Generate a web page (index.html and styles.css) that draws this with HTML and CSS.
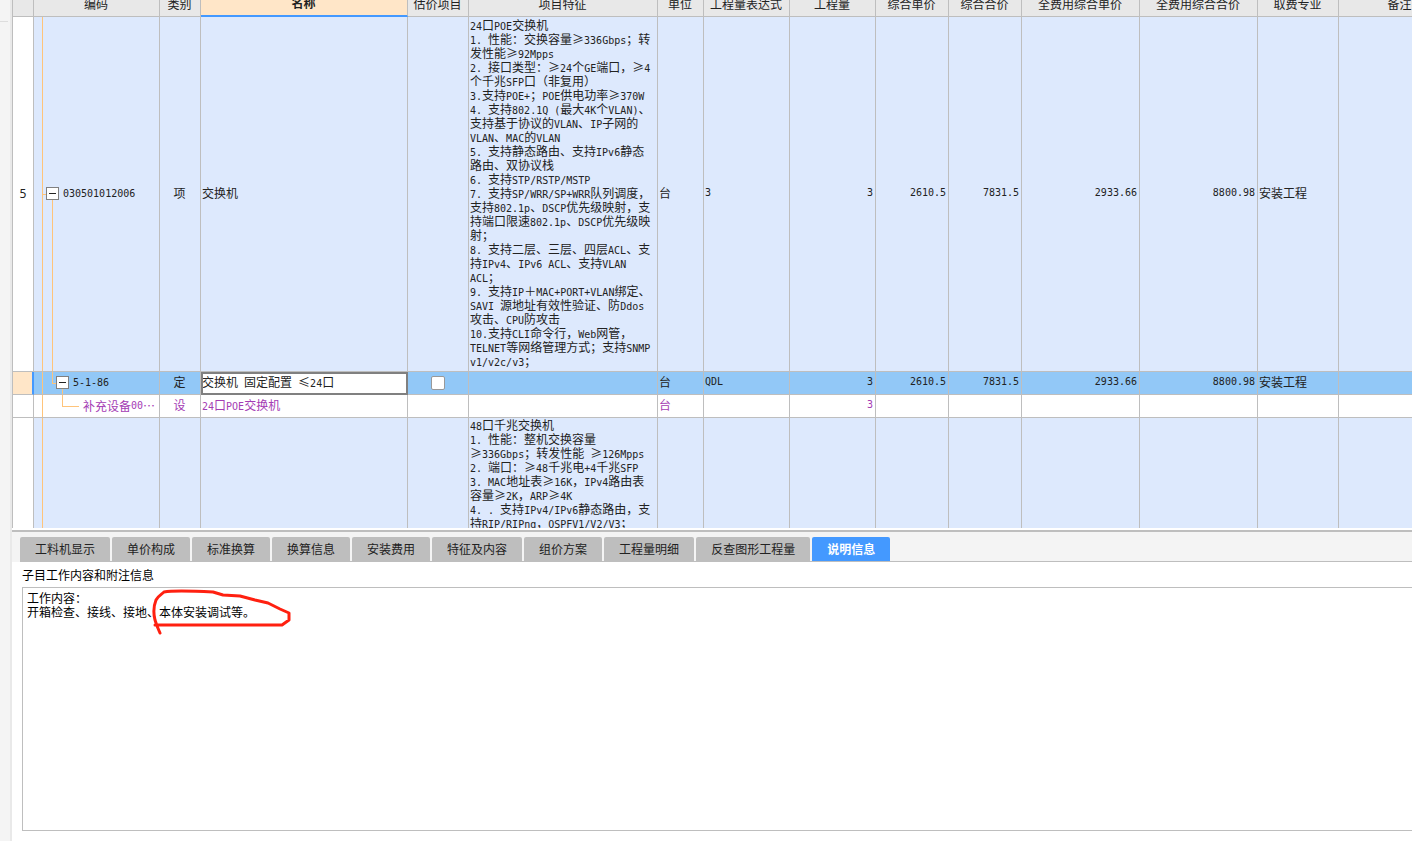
FILE: index.html
```html
<!DOCTYPE html>
<html lang="zh-CN">
<head>
<meta charset="utf-8">
<title>工程量清单</title>
<link rel="stylesheet" href="styles.css">
</head>
<body>
<div class="app">
  <aside class="gutter"><div class="gutter-line"></div></aside>
  <main class="workspace">
    <section class="grid-pane">
      <table class="grid">
        <colgroup>
          <col class="c-no"><col class="c-code"><col class="c-kind"><col class="c-name"><col class="c-est"><col class="c-feature"><col class="c-unit"><col class="c-qty"><col class="c-qty"><col class="c-price"><col class="c-price"><col class="c-full"><col class="c-full"><col class="c-major"><col class="c-note">
        </colgroup>
        <thead>
          <tr>
            <th></th><th>编码</th><th>类别</th><th class="active">名称</th><th>估价项目</th><th>项目特征</th><th>单位</th><th>工程量表达式</th><th>工程量</th><th>综合单价</th><th>综合合价</th><th>全费用综合单价</th><th>全费用综合合价</th><th>取费专业</th><th>备注</th>
          </tr>
        </thead>
        <tbody>
          <tr class="item">
            <td class="no">5</td>
            <td class="code tree-root"><div class="node"><button class="toggle" type="button" aria-label="折叠"></button><span class="num">030501012006</span></div></td>
            <td class="mid">项</td>
            <td>交换机</td>
            <td></td>
            <td class="feature"><span>24</span>口<span>POE</span>交换机<br>
<span>1. </span>性能：交换容量≥<span>336Gbps</span>；转<br>
发性能≥<span>92Mpps</span><br>
<span>2. </span>接口类型：≥<span>24</span>个<span>GE</span>端口，≥<span>4</span><br>
个千兆<span>SFP</span>口（非复用）<br>
<span>3.</span>支持<span>POE+</span>；<span>POE</span>供电功率≥<span>370W</span><br>
<span>4. </span>支持<span>802.1Q (</span>最大<span>4K</span>个<span>VLAN)</span>、<br>
支持基于协议的<span>VLAN</span>、<span>IP</span>子网的<br>
<span>VLAN</span>、<span>MAC</span>的<span>VLAN</span><br>
<span>5. </span>支持静态路由、支持<span>IPv6</span>静态<br>
路由、双协议栈<br>
<span>6. </span>支持<span>STP/RSTP/MSTP</span><br>
<span>7. </span>支持<span>SP/WRR/SP+WRR</span>队列调度，<br>
支持<span>802.1p</span>、<span>DSCP</span>优先级映射，支<br>
持端口限速<span>802.1p</span>、<span>DSCP</span>优先级映<br>
射；<br>
<span>8. </span>支持二层、三层、四层<span>ACL</span>、支<br>
持<span>IPv4</span>、<span>IPv6 ACL</span>、支持<span>VLAN</span><br>
<span>ACL</span>；<br>
<span>9. </span>支持<span>IP</span>＋<span>MAC+PORT+VLAN</span>绑定、<br>
<span>SAVI </span>源地址有效性验证、防<span>Ddos</span><br>
攻击、<span>CPU</span>防攻击<br>
<span>10.</span>支持<span>CLI</span>命令行，<span>Web</span>网管，<br>
<span>TELNET</span>等网络管理方式；支持<span>SNMP</span><br>
<span>v1/v2c/v3</span>；</td>
            <td>台</td>
            <td class="num">3</td>
            <td class="num right">3</td>
            <td class="num right">2610.5</td>
            <td class="num right">7831.5</td>
            <td class="num right">2933.66</td>
            <td class="num right">8800.98</td>
            <td>安装工程</td>
            <td></td>
          </tr>
          <tr class="short selected">
            <td class="no"></td>
            <td class="code tree-child"><div class="node level-2"><button class="toggle" type="button" aria-label="折叠"></button><span class="num">5-1-86</span></div></td>
            <td class="mid">定</td>
            <td class="editing">交换机<span class="en"> </span>固定配置<span class="en"> </span>≤<span class="en">24</span>口</td>
            <td class="mid"><input class="check" type="checkbox" aria-label="估价项目"></td>
            <td></td>
            <td>台</td>
            <td class="num">QDL</td>
            <td class="num right">3</td>
            <td class="num right">2610.5</td>
            <td class="num right">7831.5</td>
            <td class="num right">2933.66</td>
            <td class="num right">8800.98</td>
            <td>安装工程</td>
            <td></td>
          </tr>
          <tr class="short device">
            <td class="no"></td>
            <td class="code tree-leaf"><div class="node level-3">补充设备<span class="num">00</span>⋯</div></td>
            <td class="mid">设</td>
            <td><span class="en">24</span>口<span class="en">POE</span>交换机</td>
            <td></td>
            <td></td>
            <td>台</td>
            <td></td>
            <td class="num right">3</td>
            <td></td><td></td><td></td><td></td><td></td><td></td>
          </tr>
          <tr class="item next">
            <td class="no"></td>
            <td class="code tree-line"></td>
            <td></td><td></td><td></td>
            <td class="feature"><span>48</span>口千兆交换机<br>
<span>1. </span>性能：整机交换容量<br>
≥<span>336Gbps</span>；转发性能<span> </span>≥<span>126Mpps</span><br>
<span>2. </span>端口：≥<span>48</span>千兆电<span>+4</span>千兆<span>SFP</span><br>
<span>3. MAC</span>地址表≥<span>16K</span>，<span>IPv4</span>路由表<br>
容量≥<span>2K</span>，<span>ARP</span>≥<span>4K</span><br>
<span>4. . </span>支持<span>IPv4/IPv6</span>静态路由，支<br>
持<span>RIP/RIPng</span>，<span>OSPFV1/V2/V3</span>；</td>
            <td></td><td></td><td></td><td></td><td></td><td></td><td></td><td></td><td></td>
          </tr>
        </tbody>
      </table>
    </section>
    <section class="detail">
      <nav class="tabs">
        <button type="button">工料机显示</button>
        <button type="button">单价构成</button>
        <button type="button">标准换算</button>
        <button type="button">换算信息</button>
        <button type="button">安装费用</button>
        <button type="button">特征及内容</button>
        <button type="button">组价方案</button>
        <button type="button">工程量明细</button>
        <button type="button">反查图形工程量</button>
        <button type="button" class="current">说明信息</button>
      </nav>
      <div class="notes">
        <label for="work">子目工作内容和附注信息</label>
        <div class="notes-box">
          <textarea id="work" spellcheck="false">工作内容：
开箱检查、接线、接地、本体安装调试等。</textarea>
          <svg class="mark" width="144" height="50" viewBox="0 0 144 50" aria-hidden="true">
            <path d="M10 45 L7 38 L5 32 C3 24 4 17 6 12 C8 8 12 6 14 4 C24 2 45 3 63 4 L73 7 L90 8 L105 12 L118 15 L130 21 L139 25 V32 L132 37 H5" fill="none" stroke="#ff2010" stroke-width="3" stroke-linecap="round" stroke-linejoin="round"/>
          </svg>
        </div>
      </div>
    </section>
  </main>
</div>
</body>
</html>
```

FILE: styles.css
```css
* { box-sizing: border-box; }

body {
  margin: 0;
  background: #fff;
  color: #222;
  font: 12px/14px "Noto Sans CJK SC", sans-serif;
}

.app {
  display: flex;
  height: 100vh;
  overflow: hidden;
}

.gutter {
  flex: none;
  width: 12px;
  padding-top: 21px;
  background: #f4f4f4;
  border-right: 2px solid #e9e9e9;
}

.gutter-line {
  width: 8px;
  height: 1px;
  background: #ddd;
}

.workspace {
  flex: 1;
  min-width: 0;
  display: grid;
  grid-template-rows: minmax(0, 528fr) minmax(0, 313fr);
}

/* Bill table */
.grid-pane {
  min-width: 0;
  overflow: hidden;
  border-left: 1px solid #bebebe;
}

.grid {
  width: 1449px;
  margin-top: -8px;
  table-layout: fixed;
  border-collapse: separate;
  border-spacing: 0;
}

.c-no { width: 21px; }
.c-code { width: 126px; }
.c-kind { width: 41px; }
.c-name { width: 207px; }
.c-est { width: 61px; }
.c-feature { width: 189px; }
.c-unit { width: 46px; }
.c-qty { width: 86px; }
.c-price { width: 73px; }
.c-full { width: 118px; }
.c-major { width: 81px; }
.c-note { width: 123px; }

th, td {
  padding: 0 2px 2px 1px;
  border-right: 1px solid #bebebe;
  border-bottom: 1px solid #bebebe;
  text-align: left;
  vertical-align: middle;
  white-space: nowrap;
}

th {
  height: 25px;
  padding: 0 1px 1px 0;
  background: #e8e8e8;
  font-weight: 400;
  text-align: center;
}

th.active {
  background: #ffe6c8;
  border-bottom: 2px solid #4499ff;
  font-weight: 700;
}

.item td { height: 355px; background-color: #dde9fd; }
.item.next td { height: 180px; vertical-align: top; }
.short td { height: 23px; }
.selected td { background-color: #92c8f7; }
.device { color: #a43cb4; }

td.no,
.item td.no {
  padding: 0;
  background-color: #fff;
  text-align: center;
  font-family: "Noto Sans", sans-serif;
}

.item.next td.no { border-bottom: 0; }

.selected td.no {
  background-color: #ffe6c8;
  border-right: 2px solid #4499ff;
}

td.mid { padding: 0 1px 2px 0; text-align: center; }
td.right { text-align: right; }

td.feature { padding-top: 0; padding-bottom: 3px; }

.num,
.en,
.feature span {
  font-family: "DejaVu Sans Mono", monospace;
  font-size: 10px;
  white-space: pre;
}

.en,
.feature span { line-height: 0; }

td.editing {
  background-color: #fff;
  outline: 2px solid #808080;
  outline-offset: -2px;
}

.check {
  appearance: none;
  display: block;
  width: 14px;
  height: 14px;
  margin: 1px auto 0;
  border: 1px solid #999;
  border-radius: 2px;
  background: #fff;
}

/* Tree connectors are painted as cell backgrounds so they follow the row height */
td.code {
  padding: 0 0 1px;
  background-repeat: no-repeat;
  --line: linear-gradient(#ffc47a, #ffc47a);
}

.tree-line {
  background-image: var(--line);
  background-size: 1px 100%;
  background-position: 8px 0;
}

.tree-root {
  background-image: var(--line), var(--line), var(--line);
  background-size: 1px 100%, 1px 50%, 4px 1px;
  background-position: 8px 0, 18px 100%, 8px 50%;
}

.tree-child {
  background-image: var(--line), var(--line), var(--line), var(--line);
  background-size: 1px 100%, 1px 50%, 4px 1px, 1px 50%;
  background-position: 8px 0, 18px 0, 18px 50%, 28px 100%;
}

.tree-leaf {
  background-image: var(--line), var(--line), var(--line);
  background-size: 1px 100%, 1px 50%, 17px 1px;
  background-position: 8px 0, 28px 0, 28px 50%;
}

.node {
  display: flex;
  align-items: center;
  gap: 4px;
  padding-left: 12px;
}

.level-2 { padding-left: 22px; }
.level-3 { padding-left: 49px; gap: 0; }

.toggle {
  display: grid;
  place-items: center;
  width: 13px;
  height: 13px;
  padding: 0;
  border: 1px solid #808080;
  background: #fff;
}

.toggle::before {
  content: "";
  width: 7px;
  height: 1px;
  background: #222;
}

/* Detail panel */
.detail {
  min-width: 0;
  display: flex;
  flex-direction: column;
  padding-top: 2px;
}

.tabs {
  display: flex;
  gap: 2px;
  padding: 5px 0 0 8px;
  border-top: 2px solid #bebebe;
  background: linear-gradient(#bebebe, #bebebe) 8px 100% / 100% 1px no-repeat #f4f4f4;
}

.tabs button {
  height: 25px;
  padding: 0 15px 2px;
  border: 0;
  border-radius: 2px 2px 0 0;
  background: #bebebe;
  color: #222;
  font: inherit;
  white-space: nowrap;
}

.tabs .current {
  height: 24px;
  padding-bottom: 1px;
  background: #4499ff;
  color: #fff;
  font-weight: 700;
}

.notes {
  flex: 1;
  min-height: 0;
  display: flex;
  flex-direction: column;
  gap: 5px;
  padding: 6px 0 10px 10px;
  color: #000;
}

.notes-box {
  position: relative;
  flex: 1;
  min-height: 0;
  display: flex;
}

.notes textarea {
  flex: 1;
  min-width: 0;
  padding: 3px 4px;
  border: 1px solid #bebebe;
  border-right: 0;
  outline: 0;
  background: #fff;
  color: inherit;
  font: inherit;
  resize: none;
}

.mark {
  position: absolute;
  left: 128px;
  top: 1px;
  pointer-events: none;
}
```
